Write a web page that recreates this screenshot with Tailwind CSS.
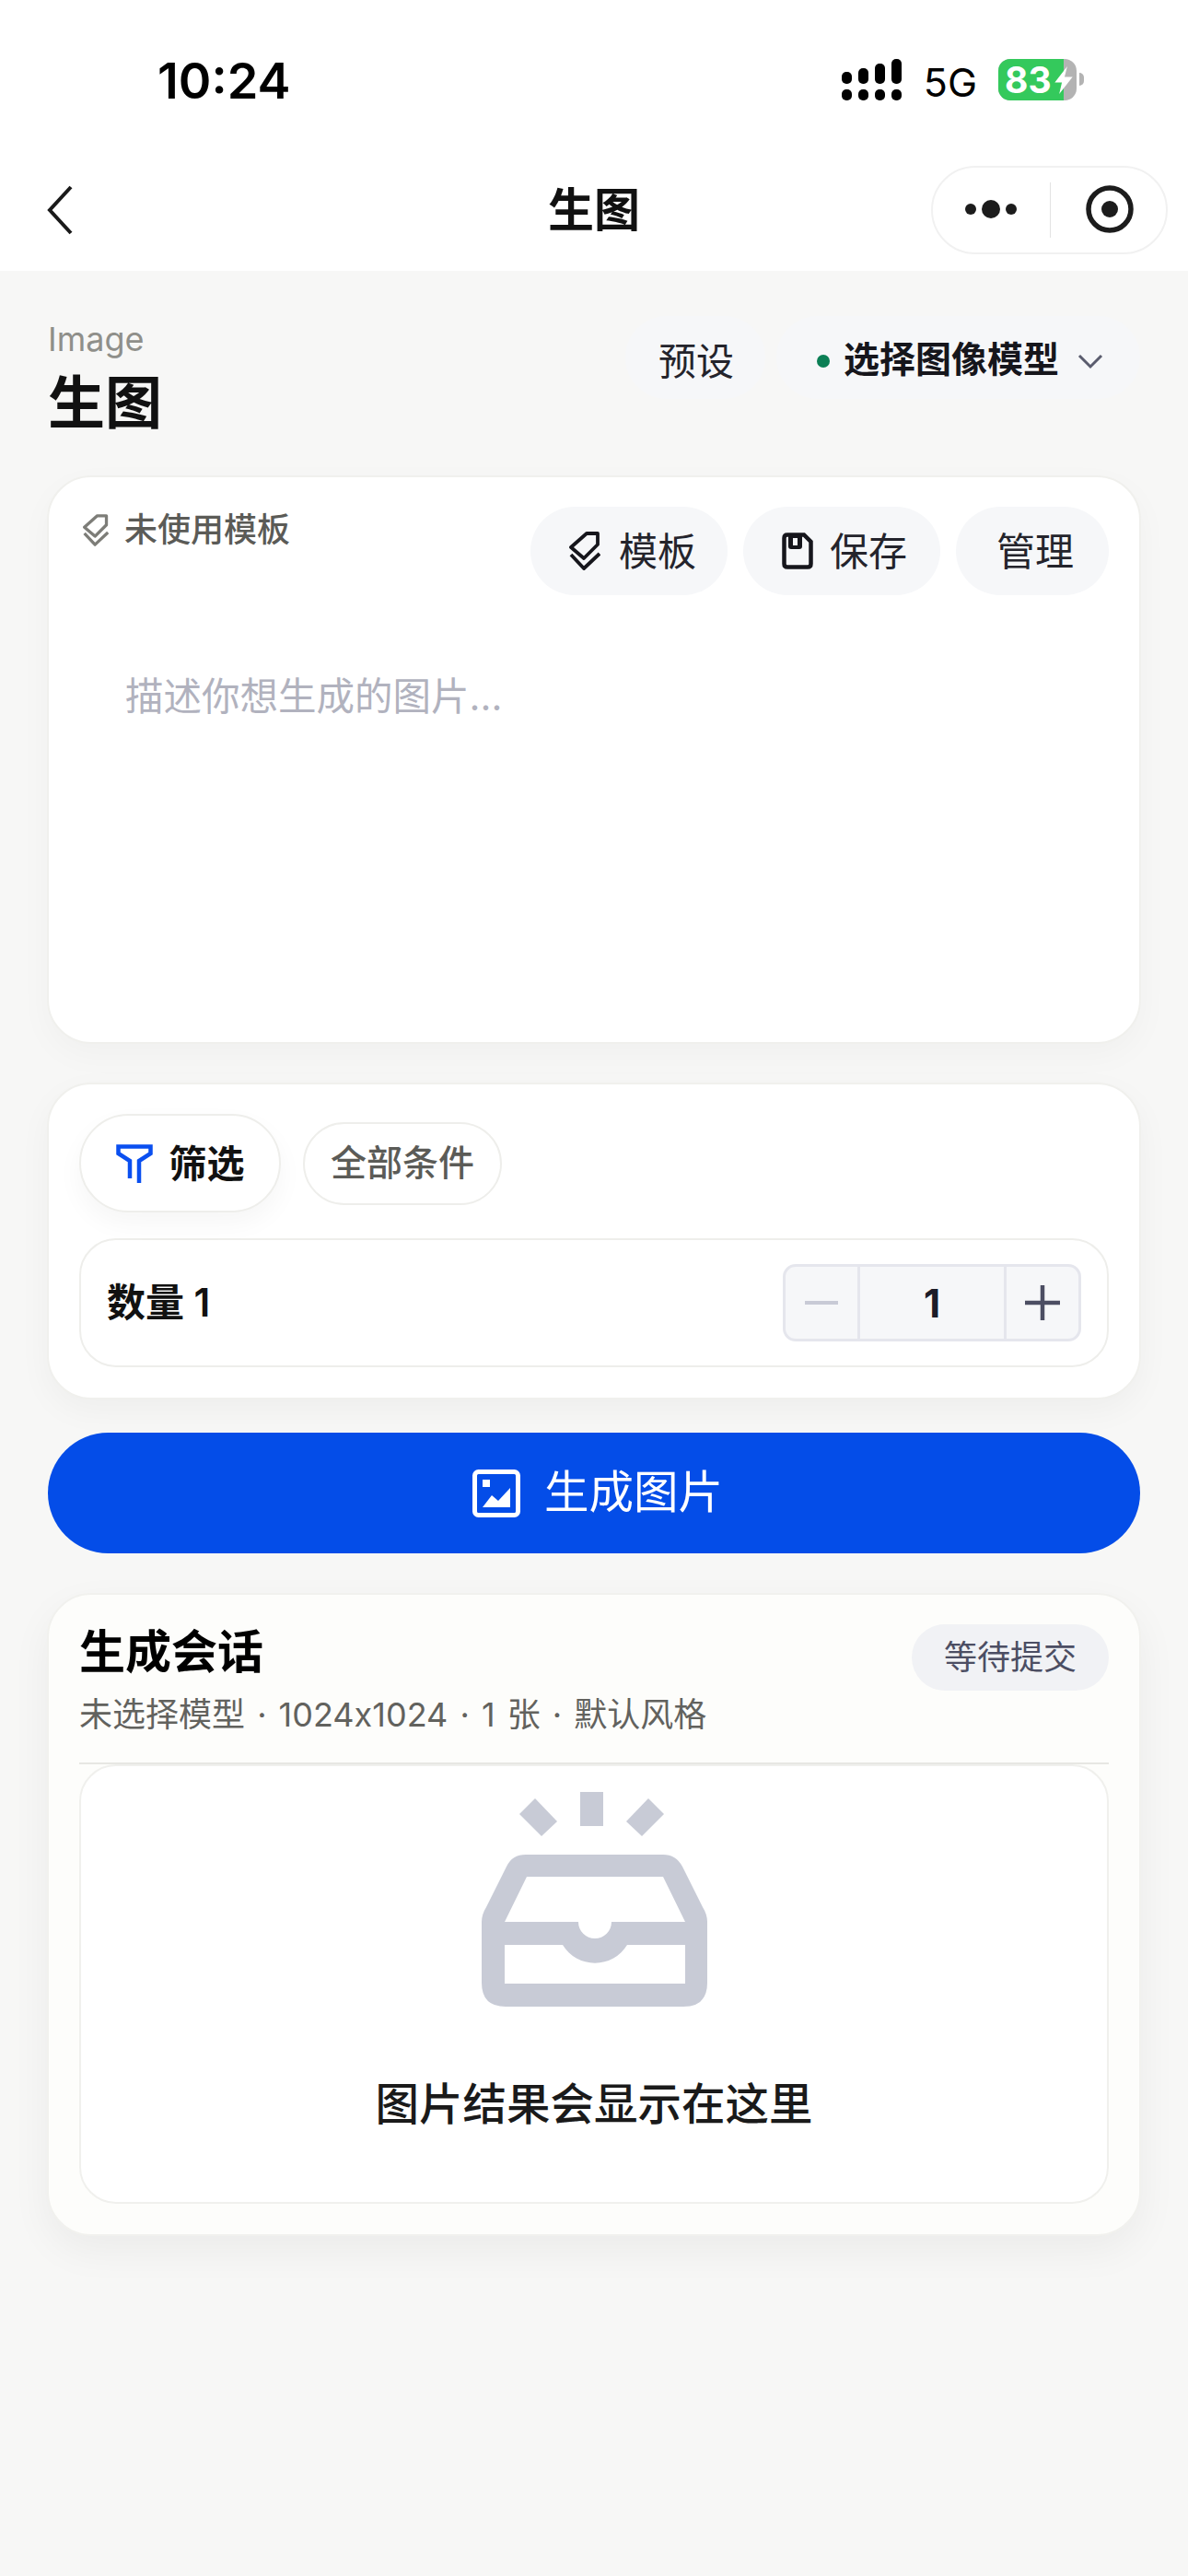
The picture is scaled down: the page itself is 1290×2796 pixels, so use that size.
<!doctype html>
<html lang="zh">
<head>
<meta charset="UTF-8">
<meta name="viewport" content="width=device-width, initial-scale=1.0">
<title>生图</title>
<script src="https://cdn.jsdelivr.net/npm/@tailwindcss/browser@4"></script>
</head>
<body class="w-[1290px] h-[2796px] overflow-hidden bg-[#f7f7f6] text-[#111111] font-['Inter','Noto_Sans_CJK_SC',sans-serif]">

<!-- status bar -->
<div class="h-[157px] bg-white flex items-start justify-between">
  <div class="ml-[171px] mt-[55px] text-[54px] leading-[66px] font-semibold font-['Inter',sans-serif] text-black">10:24</div>
  <div class="mr-[113px] mt-[64px] flex items-start">
    <svg class="w-[66px] h-[46px]" viewBox="0 0 66 46" fill="#000">
      <rect x="0" y="14" width="11" height="13" rx="5"/><rect x="18" y="10" width="11" height="17" rx="5"/><rect x="36" y="5" width="11" height="22" rx="5"/><rect x="54" y="0" width="11" height="27" rx="5"/>
      <rect x="0" y="33" width="11" height="12" rx="5"/><rect x="18" y="33" width="11" height="12" rx="5"/><rect x="36" y="33" width="11" height="12" rx="5"/><rect x="54" y="33" width="11" height="12" rx="5"/>
    </svg>
    <div class="ml-[23px] mt-[2px] text-[43px] leading-[46px] font-['Inter',sans-serif] text-black">5G</div>
    <div class="ml-[23px] relative flex">
      <div class="w-[85px] h-[45px] rounded-[13px] overflow-hidden bg-[#b3b3b3] flex">
        <div class="w-[71px] h-full bg-[#34c95c]"></div>
      </div>
      <div class="absolute left-[7px] top-0 h-[45px] text-white text-[39px] leading-[45px] font-bold font-['Inter',sans-serif]">83</div>
      <svg class="absolute left-[61px] top-[8px] w-[20px] h-[30px]" viewBox="0 0 20 31" fill="#fff"><path d="M14 0 L0 18 H8 L5 31 L20 12 H11 Z"/></svg>
      <div class="ml-[3px] mt-[15px] w-[5px] h-[14px] rounded-r-full bg-[#b3b3b3]"></div>
    </div>
  </div>
</div>

<!-- nav bar -->
<div class="relative h-[137px] bg-white flex items-center justify-center">
  <svg class="absolute left-[50px] top-[44px] w-[30px] h-[54px]" viewBox="0 0 30 54" fill="none" stroke="#1a1a1a" stroke-width="4"><path d="M27 2 L4 27 L27 52"/></svg>
  <div class="text-[50px] leading-[60px] font-semibold pt-[4px]">生图</div>
  <div class="absolute left-[1011px] top-[23px] w-[257px] h-[96px] rounded-full border-2 border-[#f1f1f1] bg-white">
    <svg class="absolute left-[-2px] top-[-2px] w-[257px] h-[95px]" viewBox="0 0 257 95" fill="#1c1c1c">
      <circle cx="43" cy="47" r="6"/><circle cx="65" cy="47" r="10"/><circle cx="87" cy="47" r="6"/>
      <rect x="129" y="18" width="1" height="60" fill="#e3e3e3"/>
      <circle cx="194" cy="47" r="23" fill="none" stroke="#1c1c1c" stroke-width="5.5"/><circle cx="194" cy="47" r="9"/>
    </svg>
  </div>
</div>

<main class="px-[51px]">
  <!-- page header -->
  <div class="h-[222px] px-[1px] flex items-start justify-between">
    <div class="pt-[52px]">
      <div class="text-[36px] leading-[44px] text-[#8f8f8a]">Image</div>
      <div class="text-[62px] leading-[76px] font-bold mt-[10px]">生图</div>
    </div>
    <div class="pt-[49px] flex gap-[12px]">
      <div class="w-[152px] h-[90px] rounded-full bg-[#f6f7f9] flex items-center justify-center pt-[10px] pl-[2px] text-[41px] text-[#24242c]">预设</div>
      <div class="w-[395px] h-[90px] rounded-full bg-[#f6f7f9] flex items-center pl-[44px] pt-[8px]">
        <span class="w-[14px] h-[14px] rounded-full bg-[#0b7f55]"></span>
        <span class="ml-[15px] text-[39px] font-semibold text-[#16161c] leading-[50px] mb-[4px]">选择图像模型</span>
        <svg class="ml-[20px] w-[28px] h-[18px]" viewBox="0 0 28 18" fill="none" stroke="#5a5c6e" stroke-width="3"><path d="M2 3 L14 15 L26 3"/></svg>
      </div>
    </div>
  </div>

  <!-- prompt card -->
  <section class="h-[617px] rounded-[48px] bg-white border-2 border-[#f0f0ed] shadow-[0_12px_36px_rgba(0,0,0,0.03)] px-[33px] pt-[32px]">
    <div class="flex justify-between items-start">
      <div class="flex items-center mt-[3px] text-[36px] leading-[44px] font-medium text-[#5b5b57]">
        <svg class="ml-[4px] w-[28px] h-[35px]" viewBox="0 0 34 42" fill="none" stroke="#7d7d78" stroke-width="4" stroke-linejoin="round"><path d="M2 17 L19 2 H31 V14 L16 29 Z"/><path d="M2 25 L16 40 L33 24"/></svg>
        <span class="ml-[17px]">未使用模板</span>
      </div>
      <div class="flex gap-[17px]">
        <div class="w-[214px] h-[96px] rounded-full bg-[#f6f7f9] flex items-center justify-center gap-[20px] pl-[8px] text-[42px] text-[#24242c]">
          <svg class="w-[34px] h-[42px]" viewBox="0 0 34 42" fill="none" stroke="#16161c" stroke-width="3.8" stroke-linejoin="round"><path d="M2 17 L19 2 H31 V14 L16 29 Z"/><path d="M2 25 L16 40 L33 24"/></svg>
          <span>模板</span>
        </div>
        <div class="w-[214px] h-[96px] rounded-full bg-[#f6f7f9] flex items-center justify-center gap-[18px] pl-[6px] text-[42px] text-[#24242c]">
          <svg class="w-[34px] h-[40px]" viewBox="0 0 34 40" fill="none"><path d="M6 2.5 H24 L31.5 10 V34 Q31.5 37.5 28 37.5 H6 Q2.5 37.5 2.5 34 V6 Q2.5 2.5 6 2.5 Z" stroke="#16161c" stroke-width="4.5"/><path d="M7 2 V15 Q7 18 10 18 H19 Q22 18 22 15 V2 Z" fill="#16161c"/><rect x="12" y="6" width="5" height="8" fill="#f6f7f9"/></svg>
          <span>保存</span>
        </div>
        <div class="w-[166px] h-[96px] rounded-full bg-[#f6f7f9] flex items-center justify-center pl-[6px] text-[42px] text-[#24242c]">管理</div>
      </div>
    </div>
    <div class="mt-[82px] ml-[50px] text-[41.5px] leading-[56px] text-[#b1b2be]">描述你想生成的图片...</div>
  </section>

  <!-- filter card -->
  <section class="mt-[42px] h-[344px] rounded-[48px] bg-white border-2 border-[#f0f0ed] shadow-[0_12px_36px_rgba(0,0,0,0.04)] px-[33px] pt-[32px]">
    <div class="flex items-center gap-[24px] h-[107px]">
      <div class="w-[219px] h-[107px] rounded-full border-2 border-[#eeeeeb] bg-white shadow-[0_12px_28px_rgba(0,0,0,0.04)] flex items-center justify-center gap-[18px] text-[41px] leading-[50px] font-bold">
        <svg class="w-[40px] h-[42px]" viewBox="0 0 40 42" fill="none" stroke="#0a4ff0" stroke-width="4.5"><path d="M15 37 V18 L2.5 10 V2.5 H37.5 V10 L25 18 V42"/></svg>
        <span>筛选</span>
      </div>
      <div class="w-[216px] h-[90px] rounded-full border-2 border-[#eeeeeb] flex items-center justify-center text-[39px] font-medium text-[#5b5b57]">全部条件</div>
    </div>
    <div class="mt-[28px] h-[140px] rounded-[40px] border-2 border-[#eeeeeb] bg-white flex items-center justify-between pl-[28px] pr-[28px]">
      <div class="text-[42px] font-semibold leading-[50px]">数量 1</div>
      <div class="w-[324px] h-[84px] rounded-[14px] border-[3px] border-[#e5e6ed] bg-[#f6f7f9] flex">
        <div class="w-[81px] flex items-center justify-center border-r-[3px] border-[#e5e6ed]"><span class="w-[36px] h-[4px] bg-[#c8cad6]"></span></div>
        <div class="flex-1 flex items-center justify-center text-[42px] font-bold text-[#1c1c28]">1</div>
        <div class="w-[81px] flex items-center justify-center border-l-[3px] border-[#e5e6ed]">
          <svg class="w-[38px] h-[38px]" viewBox="0 0 38 38" stroke="#4c4e63" stroke-width="4.5"><path d="M0 19 H38 M19 0 V38"/></svg>
        </div>
      </div>
    </div>
  </section>

  <!-- generate button -->
  <button class="mt-[36px] ml-[1px] w-[1186px] h-[131px] rounded-full bg-[#044de8] flex items-center justify-center gap-[26px] pl-[8px] text-white text-[48.5px]">
    <svg class="w-[52px] h-[52px]" viewBox="0 0 52 52" fill="none"><rect x="2.5" y="2.5" width="47" height="47" rx="4" stroke="#fff" stroke-width="5"/><rect x="11" y="11" width="8" height="8" fill="#fff"/><path d="M11 41 L21 28 L28 34 L41 20 V41 Z" fill="#fff"/></svg>
    <span>生成图片</span>
  </button>

  <!-- session card -->
  <section class="mt-[43px] h-[698px] rounded-[48px] bg-[#fdfdfb] border-2 border-[#f1f1ee] shadow-[0_16px_44px_rgba(0,0,0,0.05)] px-[33px] pt-[32px]">
    <div class="flex justify-between items-start h-[152px] border-b-2 border-[#e7e7e3]">
      <div>
        <div class="text-[50px] leading-[60px] font-bold text-black">生成会话</div>
        <div class="mt-[15px] text-[36px] leading-[46px] text-[#62625e] [word-spacing:3px]">未选择模型 · 1024x1024 · 1 张 · 默认风格</div>
      </div>
      <div class="w-[214px] h-[72px] rounded-full bg-[#f1f2f5] flex items-center justify-center text-[36px] text-[#4c4e63]">等待提交</div>
    </div>
    <div class="h-[477px] rounded-[40px] border-2 border-[#f0f0ed] bg-white flex flex-col items-center">
      <svg class="mt-[28px] w-[245px] h-[233px]" viewBox="0 0 245 233" fill="#c8cbd6">
        <path d="M41 24 L58 7 L82 32 L65 48 Z"/>
        <rect x="107" y="0" width="25" height="37"/>
        <path d="M157 32 L181 7 L198 24 L174 48 Z"/>
        <path fill-rule="evenodd" d="M48 68 H197 Q211 68 218 81 L240 125 Q245 133 245 141 V207 Q245 233 219 233 H26 Q0 233 0 207 V141 Q0 133 5 125 L27 81 Q33 68 48 68 Z M49 92 L25 141 H105 A18 18 0 0 0 141 141 H221 L197 92 Z M25 166 V208 H221 V166 H158 A41 41 0 0 1 88 166 Z"/>
      </svg>
      <div class="mt-[76px] text-[47.5px] leading-[60px] font-medium text-[#1a1a1a]">图片结果会显示在这里</div>
    </div>
  </section>
</main>
</body>
</html>
